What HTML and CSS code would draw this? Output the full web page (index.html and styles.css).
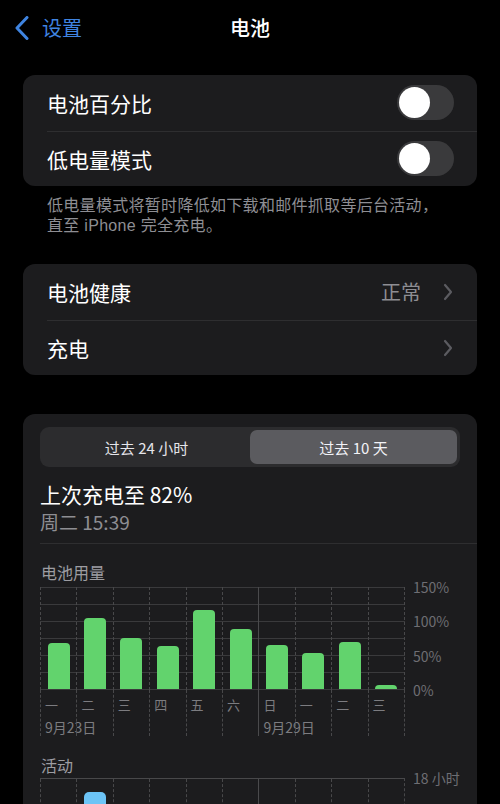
FILE: index.html
```html
<!DOCTYPE html>
<html lang="zh-CN">
<head>
<meta charset="utf-8">
<title>电池</title>
<link rel="stylesheet" href="styles.css">
</head>
<body>
<div class="screen">
  <header class="nav">
    <a class="back">
      <svg class="back-icon" viewBox="0 0 16 24" width="16" height="24"><path d="M13 1.5 L3 12 L13 22.5" fill="none" stroke="currentColor" stroke-width="3" stroke-linecap="round" stroke-linejoin="round"/></svg>
      <span>设置</span>
    </a>
    <h1 class="title">电池</h1>
    <span></span>
  </header>

  <section class="card">
    <div class="row"><span class="label">电池百分比</span><span class="toggle"><span class="knob"></span></span></div>
    <div class="row"><span class="label">低电量模式</span><span class="toggle"><span class="knob"></span></span></div>
  </section>
  <div class="note">
    <div class="note-line">低电量模式将暂时降低如下载和邮件抓取等后台活动，</div>
    <div class="note-line">直至 iPhone 完全充电。</div>
  </div>

  <section class="card card-gap">
    <div class="row"><span class="label">电池健康</span><span class="value">正常</span><svg class="chev" viewBox="0 0 10 18" width="10" height="18"><path d="M2 2 L8 9 L2 16" fill="none" stroke="currentColor" stroke-width="2.2" stroke-linecap="round" stroke-linejoin="round"/></svg></div>
    <div class="row"><span class="label">充电</span><svg class="chev" viewBox="0 0 10 18" width="10" height="18"><path d="M2 2 L8 9 L2 16" fill="none" stroke="currentColor" stroke-width="2.2" stroke-linecap="round" stroke-linejoin="round"/></svg></div>
  </section>

  <section class="card usage">
    <div class="segmented">
      <span class="seg">过去 24 小时</span>
      <span class="seg seg-on">过去 10 天</span>
    </div>
    <div class="last-title">上次充电至 82%</div>
    <div class="last-time">周二 15:39</div>
    <div class="divider"></div>

    <div class="chart-title">电池用量</div>
    <div class="chart">
      <div class="plot-wrap">
        <div class="plot">
          <div class="col"><div class="bar" style="height:46px"></div></div>
          <div class="col"><div class="bar" style="height:71px"></div></div>
          <div class="col"><div class="bar" style="height:51px"></div></div>
          <div class="col"><div class="bar" style="height:43px"></div></div>
          <div class="col"><div class="bar" style="height:79px"></div></div>
          <div class="col"><div class="bar" style="height:60px"></div></div>
          <div class="col col-week"><div class="bar" style="height:44px"></div></div>
          <div class="col"><div class="bar" style="height:36px"></div></div>
          <div class="col"><div class="bar" style="height:47px"></div></div>
          <div class="col"><div class="bar" style="height:4px"></div></div>
        </div>
        <div class="xlabels">
          <div class="xcol"><span class="day">一</span><span class="date">9月23日</span></div>
          <div class="xcol"><span class="day">二</span></div>
          <div class="xcol"><span class="day">三</span></div>
          <div class="xcol"><span class="day">四</span></div>
          <div class="xcol"><span class="day">五</span></div>
          <div class="xcol"><span class="day">六</span></div>
          <div class="xcol col-week"><span class="day">日</span><span class="date">9月29日</span></div>
          <div class="xcol"><span class="day">一</span></div>
          <div class="xcol"><span class="day">二</span></div>
          <div class="xcol"><span class="day">三</span></div>
        </div>
      </div>
      <div class="yaxis">
        <span>150%</span><span>100%</span><span>50%</span><span>0%</span>
      </div>
    </div>

    <div class="chart-title activity-title">活动</div>
    <div class="chart">
      <div class="plot-wrap">
        <div class="plot plot-activity">
          <div class="col"></div>
          <div class="col"><div class="bar bar-blue" style="height:86px"></div></div>
          <div class="col"></div>
          <div class="col"></div>
          <div class="col"></div>
          <div class="col"></div>
          <div class="col col-week"></div>
          <div class="col"></div>
          <div class="col"></div>
          <div class="col"></div>
        </div>
      </div>
      <div class="yaxis yaxis-activity"><span>18 小时</span></div>
    </div>
  </section>
</div>
</body>
</html>
```

FILE: styles.css
```css
* { box-sizing: border-box; }

html, body {
  margin: 0;
  padding: 0;
  background: #000;
}

body {
  font-family: "Noto Sans CJK SC", "Noto Sans", sans-serif;
  color: #fff;
  overflow: hidden;
}

.screen {
  width: 500px;
  height: 804px;
  overflow: hidden;
}

/* nav */
.nav {
  height: 56px;
  display: grid;
  grid-template-columns: 1fr auto 1fr;
  align-items: center;
}

.back {
  display: flex;
  align-items: center;
  gap: 12px;
  padding-left: 14px;
  color: #3f84e0;
  font-size: 20px;
  line-height: 24px;
}

.back-icon { display: block; }

.title {
  margin: 0;
  font-size: 20px;
  line-height: 24px;
  font-weight: 500;
  color: #fff;
}

/* cards */
.card {
  margin: 19px 23px 0;
  background: #1c1c1e;
  border-radius: 12px;
  overflow: hidden;
}

.card-gap { margin-top: 28px; }

.row {
  height: 55.5px;
  margin-left: 24px;
  padding-right: 23px;
  display: flex;
  align-items: center;
}

.row + .row { border-top: 1px solid #2e2e30; }

.label {
  flex: 1;
  font-size: 21px;
  line-height: 28px;
  color: #fff;
}

.toggle {
  width: 57px;
  height: 35px;
  border-radius: 18px;
  background: #3a3a3c;
  padding: 2px;
  display: flex;
}

.knob {
  width: 31px;
  height: 31px;
  border-radius: 50%;
  background: #fff;
}

.value {
  font-size: 20px;
  line-height: 28px;
  color: #8e8e93;
  margin-right: 22px;
}

.chev {
  display: block;
  color: #5b5b60;
  margin-right: 1px;
}

.note {
  margin: 10px 0 0;
  padding: 0 24px 0 47px;
  font-family: "Liberation Sans", "Noto Sans CJK SC", sans-serif;
  font-size: 16px;
  color: #8e8e93;
  letter-spacing: 0.3px;
}

.note-line {
  height: 20px;
  line-height: 20px;
  white-space: nowrap;
}

/* usage card */
.usage {
  margin-top: 39px;
  padding: 13px 17px 0;
  border-radius: 12px 12px 0 0;
  height: 420px;
}

.segmented {
  height: 40px;
  border-radius: 9px;
  background: #2c2c2e;
  padding: 3px;
  display: grid;
  grid-template-columns: 1fr 1fr;
}

.seg {
  display: flex;
  align-items: center;
  justify-content: center;
  font-size: 15px;
  color: #e5e5ea;
  border-radius: 7px;
}

.seg-on { background: #5b5b5f; color: #f2f2f7; }

.last-title {
  margin-top: 13px;
  font-size: 21px;
  line-height: 28px;
  color: #fff;
}

.last-time {
  font-size: 19px;
  line-height: 28px;
  color: #8e8e93;
}

.divider {
  margin: 7px -17px 0 0;
  height: 1px;
  background: #2e2e30;
}

.chart-title {
  margin-top: 17px;
  margin-left: 1px;
  font-size: 16px;
  line-height: 22px;
  color: #9d9da2;
}

.activity-title { margin-top: 18px; }

.chart {
  margin-top: 4px;
  display: flex;
  align-items: flex-start;
}

.activity-title + .chart { margin-top: 2px; }

.plot-wrap { width: 365px; }

.plot {
  height: 103px;
  display: grid;
  grid-template-columns: repeat(10, 1fr);
  border-right: 1px dashed #48484a;
  background: repeating-linear-gradient(to bottom, #3a3a3c 0 1px, transparent 1px 17px);
}

.col {
  border-left: 1px dashed #48484a;
  display: flex;
  align-items: flex-end;
  justify-content: center;
  padding-bottom: 1px;
}

.col.col-week { border-left: 1px solid #4a4a4c; }

.bar {
  width: 22px;
  border-radius: 4px 4px 0 0;
  background: #62d36d;
}

.bar-blue {
  background: #6cc4f6;
  border-radius: 5px 5px 0 0;
}

.xlabels {
  height: 46px;
  display: grid;
  grid-template-columns: repeat(10, 1fr);
  border-right: 1px dashed #48484a;
}

.xcol {
  border-left: 1px dashed #48484a;
  display: flex;
  flex-direction: column;
  padding: 6px 0 0 4px;
  white-space: nowrap;
  min-width: 0;
}

.xcol.col-week { border-left: 1px solid #4a4a4c; }

.day {
  font-size: 13px;
  line-height: 18px;
  color: #7c7c80;
}

.date {
  margin-top: 4px;
  font-size: 14px;
  line-height: 18px;
  color: #7c7c80;
}

.yaxis {
  margin-left: 8px;
  margin-top: -9px;
  height: 121px;
  display: flex;
  flex-direction: column;
  justify-content: space-between;
  font-size: 14px;
  line-height: 18px;
  color: #6e6e73;
}

.yaxis-activity { height: auto; }

.plot-activity {
  height: 100px;
  border-top: 1px solid #48484a;
  background: none;
}

.plot-activity .col { padding-bottom: 0; }
```
